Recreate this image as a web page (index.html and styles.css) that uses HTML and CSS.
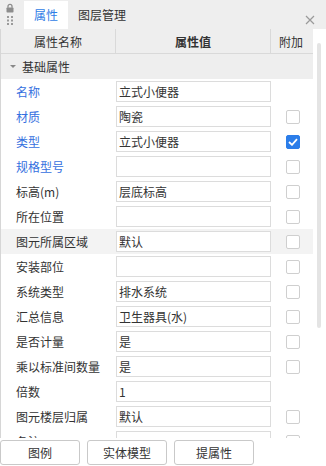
FILE: index.html
```html
<!DOCTYPE html>
<html lang="zh-CN">
<head>
    <meta charset="UTF-8">
    <title>属性</title>
    <link rel="stylesheet" href="styles.css">
</head>
<body>
    <div class="panel">
        <div class="tabbar">
            <div class="grip">
                <svg width="10" height="22" viewBox="0 0 10 22">
                    <rect x="1.5" y="4.5" width="7" height="5" rx="0.8" fill="#8c8c8c"/>
                    <path d="M3 4.8 V3.3 a2 2 0 0 1 4 0 V4.8" fill="none" stroke="#8c8c8c" stroke-width="1.3"/>
                    <rect x="2" y="13" width="2" height="2" fill="#9a9a9a"/>
                    <rect x="6" y="13" width="2" height="2" fill="#9a9a9a"/>
                    <rect x="2" y="16.5" width="2" height="2" fill="#9a9a9a"/>
                    <rect x="6" y="16.5" width="2" height="2" fill="#9a9a9a"/>
                    <rect x="2" y="20" width="2" height="2" fill="#9a9a9a"/>
                    <rect x="6" y="20" width="2" height="2" fill="#9a9a9a"/>
                </svg>
            </div>
            <div class="tab active">属性</div>
            <div class="tab">图层管理</div>
            <div class="close">
                <svg width="10" height="10" viewBox="0 0 10 10">
                    <path d="M1 1 L9 9 M9 1 L1 9" stroke="#9a9a9a" stroke-width="1.2"/>
                </svg>
            </div>
        </div>

        <div class="main">
            <div class="grid">
                <div class="head">
                    <div class="hcell">属性名称</div>
                    <div class="hcell bold">属性值</div>
                    <div class="hcell extra">附加</div>
                </div>
                <div class="group"><span class="caret"></span>基础属性</div>
                <div class="rows" id="rows"></div>
            </div>
            <div class="scrollbar"><div class="thumb"></div></div>
        </div>

        <div class="footer">
            <button class="btn">图例</button>
            <button class="btn">实体模型</button>
            <button class="btn">提属性</button>
        </div>
    </div>

    <script>
        const props = [
            { name: '名称', value: '立式小便器', blue: true, box: false },
            { name: '材质', value: '陶瓷', blue: true, box: true },
            { name: '类型', value: '立式小便器', blue: true, box: true, checked: true },
            { name: '规格型号', value: '', blue: true, box: true },
            { name: '标高(m)', value: '层底标高', box: true },
            { name: '所在位置', value: '', box: true },
            { name: '图元所属区域', value: '默认', box: true, hover: true },
            { name: '安装部位', value: '', box: true },
            { name: '系统类型', value: '排水系统', box: true },
            { name: '汇总信息', value: '卫生器具(水)', box: true },
            { name: '是否计量', value: '是', box: true },
            { name: '乘以标准间数量', value: '是', box: true },
            { name: '倍数', value: '1', box: false },
            { name: '图元楼层归属', value: '默认', box: true },
            { name: '备注', value: '', box: true }
        ];

        const rows = document.getElementById('rows');
        props.forEach(p => {
            const check = p.box
                ? `<span class="check${p.checked ? ' on' : ''}">${p.checked ? '<svg width="10" height="8" viewBox="0 0 10 8"><path d="M1 4 L4 6.8 L9 1.2" fill="none" stroke="#fff" stroke-width="1.8"/></svg>' : ''}</span>`
                : '';
            rows.innerHTML += `
                <div class="row${p.hover ? ' hover' : ''}">
                    <div class="label${p.blue ? ' blue' : ''}">${p.name}</div>
                    <div class="value"><div class="input">${p.value}</div></div>
                    <div class="add">${check}</div>
                </div>
            `;
        });
    </script>
</body>
</html>
```

FILE: styles.css
```css
* {
    margin: 0;
    padding: 0;
    box-sizing: border-box;
}

body {
    font-family: "Noto Sans CJK SC", "Noto Sans", sans-serif;
    font-size: 12px;
    color: #333;
    background-color: #ffffff;
}

.panel {
    width: 326px;
    height: 466px;
    display: flex;
    flex-direction: column;
    overflow: hidden;
}

.tabbar {
    height: 29px;
    flex-shrink: 0;
    display: flex;
    align-items: stretch;
    background-color: #eeeeee;
    padding-top: 1px;
}

.grip {
    width: 24px;
    padding: 2px 0 0 5px;
}

.tab {
    padding: 0 10px;
    line-height: 28px;
    color: #333;
}

.tab.active {
    background-color: #ffffff;
    color: #2f7de6;
}

.close {
    margin-left: auto;
    padding: 10px 11px 0 0;
}

.main {
    flex: 1;
    display: flex;
    min-height: 0;
}

.grid {
    width: 313px;
    display: flex;
    flex-direction: column;
    overflow: hidden;
    border-left: 1px solid #d6d6d6;
}

.head {
    flex-shrink: 0;
    display: grid;
    grid-template-columns: 115px 155px 42px;
    height: 25px;
    background-color: #eeeeee;
    border-bottom: 1px solid #d9d9d9;
}

.hcell {
    display: flex;
    align-items: center;
    justify-content: center;
    border-right: 1px solid #d9d9d9;
}

.hcell.bold {
    font-weight: bold;
}

.hcell.extra {
    border-right: none;
    justify-content: flex-start;
    padding-left: 8px;
}

.group {
    flex-shrink: 0;
    height: 25px;
    display: flex;
    align-items: center;
    background-color: #eeeeee;
    padding-left: 9px;
}

.caret {
    width: 0;
    height: 0;
    border-left: 3px solid transparent;
    border-right: 3px solid transparent;
    border-top: 3px solid #888;
    margin-right: 6px;
}

.rows {
    flex-shrink: 0;
}

.row {
    display: grid;
    grid-template-columns: 115px 155px 42px;
    height: 25px;
    align-items: center;
}

.row.hover {
    background-color: #f3f3f3;
}

.label {
    padding-left: 15px;
    white-space: nowrap;
}

.label.blue {
    color: #3570e0;
}

.input {
    height: 21px;
    border: 1px solid #dcdcdc;
    background-color: #ffffff;
    padding-left: 2px;
    line-height: 19px;
}

.add {
    display: flex;
    justify-content: center;
    padding-left: 1px;
}

.check {
    width: 14px;
    height: 14px;
    border: 1px solid #cfcfcf;
    border-radius: 2px;
    background-color: #ffffff;
    display: flex;
    align-items: center;
    justify-content: center;
}

.check.on {
    background-color: #2b7de9;
    border-color: #2b7de9;
}

.scrollbar {
    width: 13px;
    padding: 14px 0 0 4px;
}

.thumb {
    width: 4px;
    height: 285px;
    border-radius: 2px;
    background-color: #e4e4e4;
}

.footer {
    height: 28px;
    flex-shrink: 0;
    display: flex;
    gap: 7px;
    padding-top: 2px;
}

.btn {
    width: 80px;
    height: 25px;
    font-family: inherit;
    font-size: 12px;
    color: #333;
    background-color: #ffffff;
    border: 1px solid #c9c9c9;
    border-radius: 3px;
}
```
